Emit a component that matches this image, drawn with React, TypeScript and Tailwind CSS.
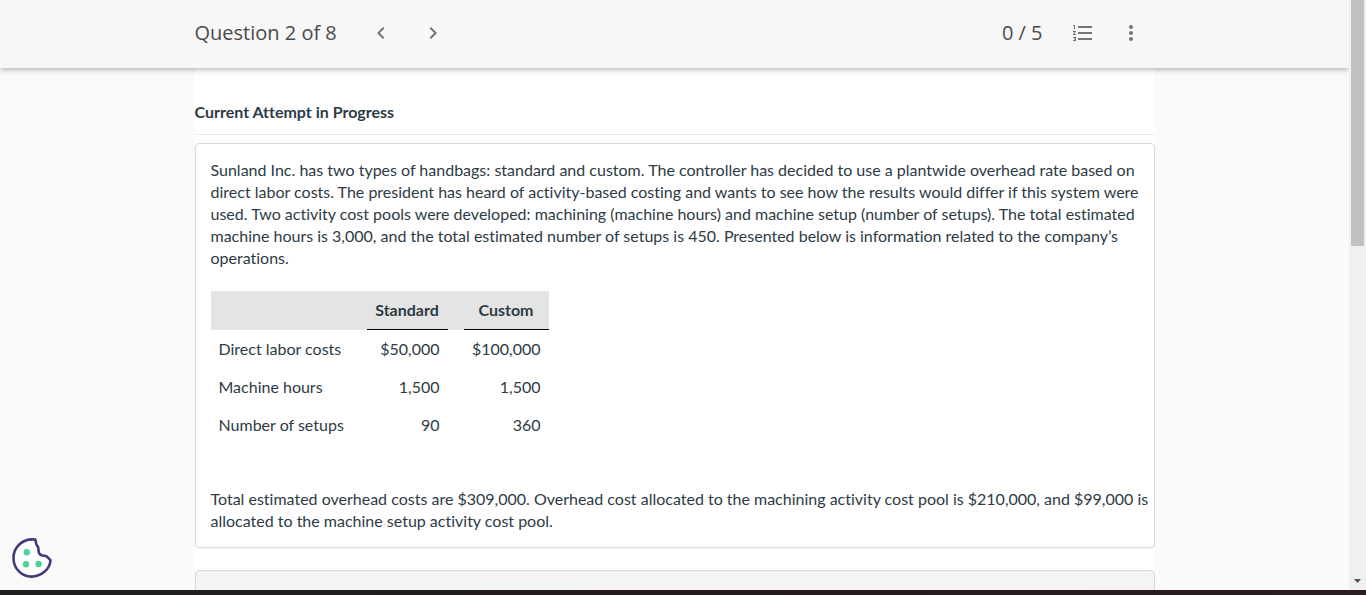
import React from 'react';
import {
  MdFormatListNumbered,
  MdKeyboardArrowLeft,
  MdKeyboardArrowRight,
  MdMoreVert,
} from 'react-icons/md';

const rows = [
  { label: 'Direct labor costs', standard: '$50,000', custom: '$100,000' },
  { label: 'Machine hours', standard: '1,500', custom: '1,500' },
  { label: 'Number of setups', standard: '90', custom: '360' },
];

const introLines = [
  'Sunland Inc. has two types of handbags: standard and custom. The controller has decided to use a plantwide overhead rate based on',
  'direct labor costs. The president has heard of activity-based costing and wants to see how the results would differ if this system were',
  'used. Two activity cost pools were developed: machining (machine hours) and machine setup (number of setups). The total estimated',
  'machine hours is 3,000, and the total estimated number of setups is 450. Presented below is information related to the company’s',
  'operations.',
];

const overheadLines = [
  'Total estimated overhead costs are $309,000. Overhead cost allocated to the machining activity cost pool is $210,000, and $99,000 is',
  'allocated to the machine setup activity cost pool.',
];

const iconButton = 'flex size-10 items-center justify-center text-[#757575]';

const Header = () => {
  return (
    <header className="relative z-10 h-[68px] shrink-0 bg-[#f7f7f7] shadow-[0_2px_4px_-1px_rgba(0,0,0,0.16),0_4px_5px_0_rgba(0,0,0,0.08),0_1px_8px_0_rgba(0,0,0,0.08)]">
      <div className="mx-auto flex h-full max-w-[960px] items-center justify-between pb-0.5 pr-1 font-['Open_Sans',sans-serif] text-xl text-[#4a4a4a]">
        <div className="flex items-center">
          <h1>Question 2 of 8</h1>
          <div className="ml-6 flex gap-3">
            <button type="button" aria-label="Previous question" className={iconButton}>
              <MdKeyboardArrowLeft className="size-6" />
            </button>
            <button type="button" aria-label="Next question" className={iconButton}>
              <MdKeyboardArrowRight className="size-6" />
            </button>
          </div>
        </div>
        <div className="flex items-center">
          <span>0 / 5</span>
          <div className="ml-5 flex gap-2">
            <button type="button" aria-label="Question list" className={iconButton}>
              <MdFormatListNumbered className="size-6" />
            </button>
            <button type="button" aria-label="More options" className={iconButton}>
              <MdMoreVert className="size-6" />
            </button>
          </div>
        </div>
      </div>
    </header>
  );
};

// Keeps the authored line breaks on wide screens, wraps freely below that
const Paragraph = ({ lines }: { lines: string[] }) => {
  return (
    <p className="xl:whitespace-nowrap">
      {lines.map((line) => (
        <React.Fragment key={line}>
          {line} <br className="hidden xl:inline" />
        </React.Fragment>
      ))}
    </p>
  );
};

const CostTable = () => {
  return (
    <table className="mb-11 mt-[22px] border-collapse">
      <thead>
        <tr className="bg-[#e4e4e4] font-bold">
          <td className="w-[140px] p-2"></td>
          <td className="p-2"></td>
          <th scope="col" className="w-[81px] border-b border-black p-2">Standard</th>
          <td className="p-2"></td>
          <th scope="col" className="w-[85px] border-b border-black p-2">Custom</th>
        </tr>
      </thead>
      <tbody>
        {rows.map((row) => (
          <tr key={row.label}>
            <th scope="row" className="whitespace-nowrap py-2 pl-2 text-left font-normal">{row.label}</th>
            <td className="p-2"></td>
            <td className="p-2 text-right">{row.standard}</td>
            <td className="p-2"></td>
            <td className="p-2 text-right">{row.custom}</td>
          </tr>
        ))}
      </tbody>
    </table>
  );
};

const Question = () => {
  return (
    <main className="mx-auto max-w-[960px] bg-white">
      <h2 className="border-b border-[#e9e9e9] pb-[11px] pt-[33px] font-bold">
        Current Attempt in Progress
      </h2>
      <section className="mt-2 rounded border border-[#d8d8d8] p-[15px] shadow-[0_1px_1px_rgba(0,0,0,0.05)]">
        <Paragraph lines={introLines} />
        <CostTable />
        <Paragraph lines={overheadLines} />
      </section>
      <section className="mt-[22px] h-20 rounded border border-[#d8d8d8] bg-[#f4f4f4]"></section>
    </main>
  );
};

const CookieButton = () => {
  return (
    <button type="button" aria-label="Cookie settings" className="absolute bottom-3 left-3 z-20">
      <svg viewBox="0 0 40 40" className="size-10" fill="none">
        <path
          d="M23.300 1.600C11 0 1.500 9 1.500 20S10 38.600 19.500 38.600C29 38.600 38 31.500 38.500 22C37 21 36 19.500 34.500 18.200C32 17.500 29.500 17.800 27.800 16.200C25.800 14.300 27 11.500 26 9C25.300 7.500 23.800 6.500 24 4.500Z"
          fill="#fff"
          stroke="#433a7b"
          strokeWidth="2.6"
          strokeLinejoin="round"
        />
        <circle cx="14.800" cy="14.200" r="3.200" fill="#4bd29a" />
        <circle cx="14" cy="26.300" r="3.200" fill="#4bd29a" />
        <circle cx="26.600" cy="26" r="3.200" fill="#4bd29a" />
      </svg>
    </button>
  );
};

const ScrollTrack = () => {
  return (
    <div className="flex w-[17px] shrink-0 flex-col items-center justify-between bg-[#f0f0f0] pb-[7px]">
      <div className="h-[246px] w-[13px] bg-[#c1c1c1]"></div>
      <svg viewBox="0 0 7 4" className="h-1 w-[7px]" fill="#505050">
        <path d="M0 0H7L3.500 4Z" />
      </svg>
    </div>
  );
};

const App = () => {
  return (
    <div className="flex h-screen flex-col font-['Lato',sans-serif] text-base leading-[22px] text-[#2d3b45] [font-variant-ligatures:none]">
      <div className="flex min-h-0 flex-1">
        <div className="relative flex min-w-0 flex-1 flex-col overflow-hidden bg-[#fafafa]">
          <Header />
          <div className="min-h-0 flex-1 overflow-hidden">
            <Question />
          </div>
          <CookieButton />
        </div>
        <ScrollTrack />
      </div>
      <div className="h-[5px] shrink-0 bg-linear-to-r from-[#202020] via-[#24191b] to-[#2d1c20]"></div>
    </div>
  );
};

export default App;
